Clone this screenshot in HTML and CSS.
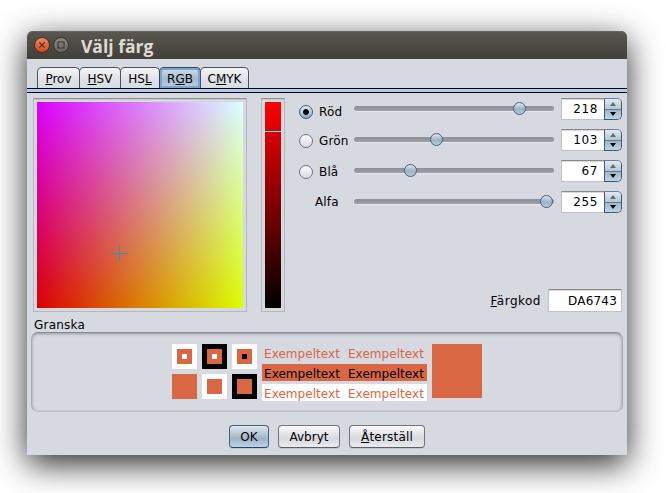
FILE: index.html
```html
<!DOCTYPE html>
<html lang="sv">
<head>
<meta charset="utf-8">
<title>Välj färg</title>
<link rel="stylesheet" href="styles.css">
</head>
<body>
<div class="window">
  <header class="titlebar">
    <svg class="winbtn" viewBox="0 0 16 16"><defs><linearGradient id="c" x2="0" y2="1"><stop stop-color="#f58a63"/><stop offset="1" stop-color="#d9431a"/></linearGradient></defs><circle cx="8" cy="8" r="7.5" fill="url(#c)" stroke="#34332e"/><path d="M5.3 5.3l5.4 5.4M10.7 5.3l-5.4 5.4" stroke="#4a2b20" stroke-width="1.2"/></svg>
    <svg class="winbtn" viewBox="0 0 16 16"><defs><linearGradient id="m" x2="0" y2="1"><stop stop-color="#8b887f"/><stop offset="1" stop-color="#66645c"/></linearGradient></defs><circle cx="8" cy="8" r="7.5" fill="url(#m)" stroke="#34332e"/><rect x="5" y="5" width="6" height="6" fill="none" stroke="#33322d"/></svg>
    <h1 class="title">Välj färg</h1>
  </header>
  <nav class="tabs">
    <span class="tab tab-prov"><u>P</u>rov</span>
    <span class="tab tab-hsv"><u>H</u>SV</span>
    <span class="tab tab-hsl">HS<u>L</u></span>
    <span class="tab tab-rgb selected">R<u>G</u>B</span>
    <span class="tab tab-cmyk">C<u>M</u>YK</span>
  </nav>
  <div class="tabband"></div>
  <main class="picker">
    <div class="frame"><div class="plane"><svg class="cross" viewBox="0 0 17 17"><path d="M0 8.5h8M9 8.5h8M8.5 0v8M8.5 9v8" stroke="#2598bc"/></svg></div></div>
    <div class="frame"><div class="ramp"><i class="mark"></i></div></div>
    <section class="controls">
      <div class="channel">
        <label class="name name-red"><i class="radio on"></i>Röd</label>
        <div class="slider"><i class="thumb" style="left:158.5px"></i></div>
        <div class="spinner"><span class="value">218</span><span class="arrows"><i class="up"></i><i class="down"></i></span></div>
      </div>
      <div class="channel">
        <label class="name"><i class="radio"></i>Grön</label>
        <div class="slider"><i class="thumb" style="left:75.5px"></i></div>
        <div class="spinner"><span class="value">103</span><span class="arrows"><i class="up"></i><i class="down"></i></span></div>
      </div>
      <div class="channel">
        <label class="name name-blue"><i class="radio"></i>Blå</label>
        <div class="slider"><i class="thumb" style="left:49.5px"></i></div>
        <div class="spinner"><span class="value">67</span><span class="arrows"><i class="up"></i><i class="down"></i></span></div>
      </div>
      <div class="channel">
        <label class="name name-alpha">Alfa</label>
        <div class="slider"><i class="thumb" style="left:185.5px"></i></div>
        <div class="spinner"><span class="value">255</span><span class="arrows"><i class="up"></i><i class="down"></i></span></div>
      </div>
      <div class="code"><label class="codelabel"><u>F</u>ärgkod</label><span class="codefield">DA6743</span></div>
    </section>
  </main>
  <h2 class="heading">Granska</h2>
  <section class="preview">
    <div class="swatches">
      <div class="sw white"><i class="mid"><i class="dot white"></i></i></div>
      <div class="sw black"><i class="mid"><i class="dot white"></i></i></div>
      <div class="sw white"><i class="mid"><i class="dot black"></i></i></div>
      <div class="sw orange"></div>
      <div class="sw white"><i class="mid"></i></div>
      <div class="sw black"><i class="mid"></i></div>
    </div>
    <div class="samples">
      <p class="sample"><span>Exempeltext</span><span>Exempeltext</span></p>
      <p class="sample filled"><span>Exempeltext</span><span>Exempeltext</span></p>
      <p class="sample white"><span>Exempeltext</span><span>Exempeltext</span></p>
    </div>
    <div class="current"></div>
  </section>
  <footer class="buttons">
    <span class="btn btn-ok">OK</span>
    <span class="btn btn-cancel">Avbryt</span>
    <span class="btn btn-reset"><u>Å</u>terställ</span>
  </footer>
</div>
</body>
</html>
```
FILE: styles.css
```css
* { box-sizing: border-box; margin: 0; padding: 0; }
body { height: 493px; overflow: hidden; background: #fff; padding: 31px 39px 38px 27px; font: 12px/14px "DejaVu Sans", sans-serif; color: #000; }
i { display: block; font-style: normal; }
u { text-decoration-thickness: 1px; text-underline-offset: 1px; text-decoration-skip-ink: none; }
.window { width: 600px; height: 424px; background: #d6d9e0; border-radius: 6px 6px 0 0; box-shadow: 0 9px 33px rgba(0,0,0,.85); }

.titlebar { height: 28px; display: flex; align-items: center; padding-left: 7px; gap: 3px; border-radius: 6px 6px 0 0; background: linear-gradient(#59574e, #403f3a); box-shadow: inset 0 1px #68665c; }
.winbtn { width: 16px; height: 16px; }
.title { margin: 2px 0 0 9px; font: bold 17.5px/26px "Open Sans", sans-serif; color: #dfdbd2; }

.tabs { display: flex; height: 29px; padding: 8px 0 0 10px; }
.tab { height: 21px; margin-right: -1px; border: 1px solid #4c535c; border-bottom: 0; border-radius: 5px 5px 0 0; text-align: center; line-height: 22px; background: linear-gradient(#f3f4f6, #dfe1e6 60%, #d8dbe2); }
.tab-prov { width: 43px; }
.tab-hsv { width: 42px; }
.tab-hsl { width: 40px; }
.tab-rgb { width: 42px; }
.tab-cmyk { width: 49px; }
.selected { background: linear-gradient(#d4dfe8, #a8bccc 50%, #b5cce0); border-color: #2d465c; box-shadow: inset 0 0 0 2px #78a6d0; }
.tabband { height: 5px; border: solid #000419; border-width: 1px 0; background: #b4cbe5; }

.picker { display: flex; gap: 14px; padding: 5px 5px 0 6px; }
.frame { height: 214px; padding: 3px; border: 1px solid #b5b7bb; border-top-color: #8e9094; box-shadow: inset 0 1px #c5c7cc; }
.plane { position: relative; width: 206px; height: 206px; background: linear-gradient(#00f, #000), linear-gradient(90deg, #da0000, #daff00); background-blend-mode: screen; }
.cross { position: absolute; left: 74px; top: 143px; width: 17px; height: 17px; }
.ramp { width: 16px; height: 206px; padding-top: 29px; background: linear-gradient(#f00, #000); }
.mark { height: 1px; background: #25ffff; }

.controls { width: 323px; height: 214px; display: flex; flex-direction: column; gap: 9px; }
.channel { display: grid; grid-template-columns: 55px 207px 61px; align-items: start; height: 22px; }
.name { display: flex; align-items: center; gap: 6px; height: 23px; letter-spacing: .15px; }
.name-red { height: 27px; }
.name-blue { height: 24px; }
.name-alpha { padding-left: 16px; height: 21px; }
.radio { width: 14px; height: 14px; border: 1px solid #6e7278; border-radius: 50%; background: linear-gradient(#fafafb, #dcdee3); }
.on { border-color: #3f5c75; background: radial-gradient(circle, #000 0 2.4px, transparent 3.4px), linear-gradient(#e6eef4, #8fa9be); }
.slider { position: relative; width: 200px; height: 5px; margin-top: 8px; border-radius: 3px; background: linear-gradient(#8b8e96, #9da0a8); box-shadow: 0 1px #e6e8ec; }
.thumb { position: absolute; top: -4px; width: 13px; height: 13px; border: 1px solid #47617a; border-radius: 50%; background: linear-gradient(#dce6ee, #9db3c5 55%, #b6cbdc); }
.spinner { display: flex; height: 22px; }
.value { width: 43px; height: 22px; padding-right: 6px; text-align: right; letter-spacing: .6px; line-height: 21px; background: #fff; border: 1px solid #c0c1c4; border-top-color: #88898c; border-right: 0; box-shadow: inset 0 1px #d8d8d8; }
.arrows { width: 18px; height: 22px; display: flex; flex-direction: column; border: 1px solid #3f5b73; border-top-color: #65809a; border-radius: 0 5px 5px 0; overflow: hidden; }
.up, .down { flex: 1; display: flex; justify-content: center; align-items: center; }
.up { background: linear-gradient(#e1eaf1, #b4c5d3); border-bottom: 1px solid #607c94; }
.down { background: linear-gradient(#a1b7c9, #bdd3e6); }
.up::before { content: ""; border: 3px solid transparent; border-top: 0; border-bottom: 4px solid #656970; }
.down::before { content: ""; border: 3px solid transparent; border-bottom: 0; border-top: 4px solid #000; }
.code { margin-top: auto; display: flex; justify-content: flex-end; align-items: center; gap: 7px; height: 23px; }
.codelabel { letter-spacing: .5px; }
.codefield { width: 74px; height: 23px; padding-right: 4px; text-align: right; letter-spacing: .2px; line-height: 22px; background: #fff; border: 1px solid #c0c1c4; border-top-color: #88898c; box-shadow: inset 0 1px #d8d8d8; }

.heading { height: 20px; padding-left: 7px; font: 12px/26px "DejaVu Sans", sans-serif; letter-spacing: .2px; }
.preview { width: 592px; height: 80px; margin-left: 4px; padding: 11px 0 0 140px; display: flex; gap: 5px; border: 1px solid #aaacb1; border-top-color: #888b90; border-bottom-color: #b9bbbf; border-radius: 7px; box-shadow: inset 0 1px 3px rgba(60,65,75,.45); }
.swatches { display: grid; grid-template-columns: repeat(3, 25px); grid-auto-rows: 25px; gap: 5px; }
.sw { padding: 5px; }
.mid { width: 15px; height: 15px; padding: 5px; background: #da6743; }
.dot { width: 5px; height: 5px; }
.white { background: #fff; }
.black { background: #000; }
.orange { background: #da6743; }
.samples { display: grid; grid-template-rows: repeat(3, 17px); gap: 3px; width: 165px; }
.sample { display: flex; gap: 8px; padding-left: 2px; line-height: 20px; letter-spacing: .05px; color: #da6743; }
.filled { background: #da6743; color: #000; }
.current { width: 50px; height: 54px; background: #da6743; }

.buttons { display: flex; justify-content: center; gap: 9px; padding-top: 13px; }
.btn { height: 23px; border: 1px solid #72757b; border-bottom-color: #5b5e64; border-radius: 4px; text-align: center; line-height: 22px; background: linear-gradient(#fafafb, #d5d8de 60%, #e9ebee); box-shadow: 0 1px rgba(150,155,165,.3); }
.btn-ok { width: 40px; border-color: #44617a; border-bottom-color: #2b445b; background: linear-gradient(#dfe8ee, #9fb5c6 60%, #bdd3e7); }
.btn-cancel { width: 62px; }
.btn-reset { width: 76px; letter-spacing: .2px; }
```
